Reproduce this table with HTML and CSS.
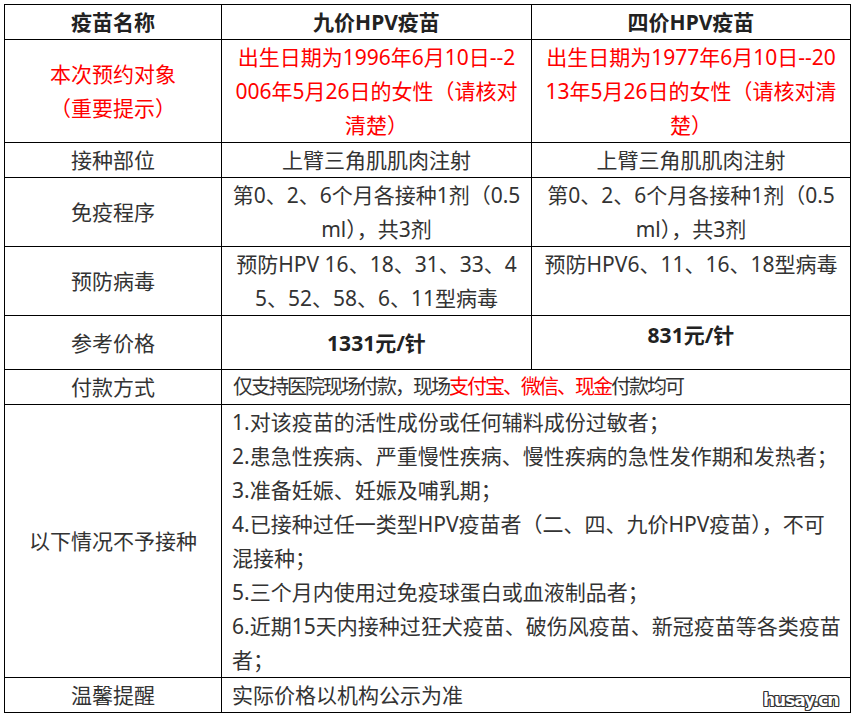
FILE: index.html
```html
<!DOCTYPE html>
<html lang="zh-CN">
<head>
<meta charset="utf-8">
<title>HPV疫苗</title>
<link rel="stylesheet" href="styles.css">
</head>
<body>
<div class="page">
<table class="vt">
  <colgroup><col class="c1"><col class="c2"><col class="c3"></colgroup>
  <tr>
    <th>疫苗名称</th>
    <th>九价HPV疫苗</th>
    <th>四价HPV疫苗</th>
  </tr>
  <tr>
    <td class="lbl red">本次预约对象<br>（重要提示）</td>
    <td class="val red">出生日期为1996年6月10日--2<br>006年5月26日的女性（请核对<br>清楚）</td>
    <td class="val red">出生日期为1977年6月10日--20<br>13年5月26日的女性（请核对清<br>楚）</td>
  </tr>
  <tr>
    <td class="lbl">接种部位</td>
    <td class="val">上臂三角肌肌肉注射</td>
    <td class="val">上臂三角肌肌肉注射</td>
  </tr>
  <tr>
    <td class="lbl">免疫程序</td>
    <td class="val">第0、2、6个月各接种1剂（0.5<br>ml），共3剂</td>
    <td class="val">第0、2、6个月各接种1剂（0.5<br>ml），共3剂</td>
  </tr>
  <tr>
    <td class="lbl">预防病毒</td>
    <td class="val">预防HPV 16、18、31、33、4<br>5、52、58、6、11型病毒</td>
    <td class="val">预防HPV6、11、16、18型病毒</td>
  </tr>
  <tr>
    <td class="lbl">参考价格</td>
    <td class="val price price-mid">1331元/针</td>
    <td class="val price price-top">831元/针</td>
  </tr>
  <tr>
    <td class="lbl">付款方式</td>
    <td class="wide tight" colspan="2">仅支持医院现场付款，现场<span class="red">支付宝、微信、现金</span>付款均可</td>
  </tr>
  <tr>
    <td class="lbl">以下情况不予接种</td>
    <td class="wide" colspan="2">1.对该疫苗的活性成份或任何辅料成份过敏者；<br>2.患急性疾病、严重慢性疾病、慢性疾病的急性发作期和发热者；<br>3.准备妊娠、妊娠及哺乳期；<br>4.已接种过任一类型HPV疫苗者（二、四、九价HPV疫苗），不可<br>混接种；<br>5.三个月内使用过免疫球蛋白或血液制品者；<br>6.近期15天内接种过狂犬疫苗、破伤风疫苗、新冠疫苗等各类疫苗<br>者；</td>
  </tr>
  <tr>
    <td class="lbl">温馨提醒</td>
    <td class="wide" colspan="2">实际价格以机构公示为准</td>
  </tr>
</table>
<div class="mark">husay.cn</div>
</div>
</body>
</html>
```
FILE: styles.css
```css
html, body {
  margin: 0;
  padding: 0;
  background: #ffffff;
}
.page {
  position: relative;
  padding: 4px 0 0 4px;
  width: 852px;
  height: 717px;
}
.vt {
  border-collapse: collapse;
  table-layout: fixed;
  width: 846px;
  font-family: "Noto Sans", "Noto Sans CJK SC", sans-serif;
  font-size: 21px;
  line-height: 34px;
  color: #333333;
}
.c1 { width: 217px; }
.c2 { width: 310px; }
.c3 { width: 319px; }
.vt th, .vt td {
  border: 1px solid #000000;
  padding: 0 4px;
  white-space: nowrap;
}
.vt th {
  font-weight: bold;
  text-align: center;
  color: #222222;
}
.vt .lbl {
  text-align: center;
  vertical-align: middle;
}
.vt .val {
  text-align: center;
  vertical-align: top;
}
.vt .red { color: #ff0000; }
.vt .price {
  font-weight: bold;
  color: #222222;
}
.vt .price-mid {
  vertical-align: middle;
  padding-top: 10px;
  padding-bottom: 9px;
}
.vt .price-top {
  vertical-align: top;
  padding-top: 2px;
}
.vt .wide {
  text-align: left;
  vertical-align: top;
  padding-left: 10px;
}
.vt .tight {
  font-size: 20px;
  letter-spacing: -2px;
  padding-left: 11px;
}
.mark {
  position: absolute;
  left: 763px;
  top: 690px;
  font-family: "DejaVu Sans", sans-serif;
  font-weight: bold;
  font-size: 17px;
  letter-spacing: -1px;
  color: #ffffff;
  text-shadow: 1px 0 0 #333, -1px 0 0 #333, 0 1px 0 #333, 0 -1px 0 #333, 1px 1px 0 #333, -1px -1px 0 #333, 1px -1px 0 #333, -1px 1px 0 #333;
}
```
